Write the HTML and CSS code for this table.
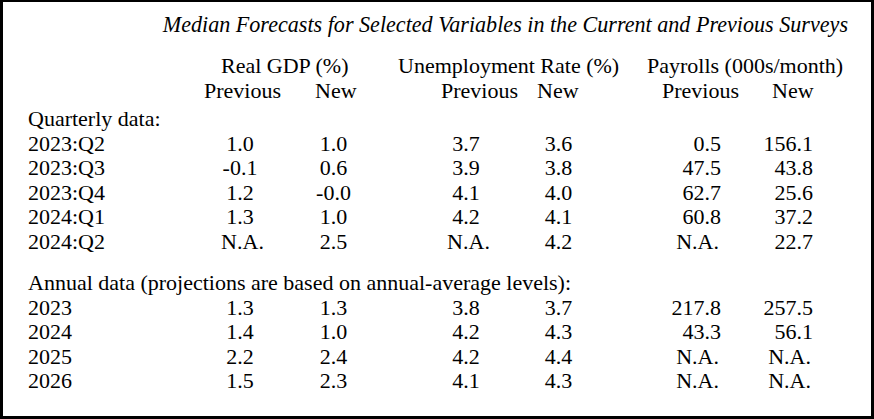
FILE: index.html
```html
<!DOCTYPE html>
<html lang="en">
<head>
<meta charset="utf-8">
<title>Median Forecasts</title>
<link rel="stylesheet" href="styles.css">
</head>
<body>
<div class="frame">
  <div class="title">Median Forecasts for Selected Variables in the Current and Previous Surveys</div>
  <div class="groups">
    <span class="g g1">Real GDP (%)</span>
    <span class="g g2">Unemployment Rate (%)</span>
    <span class="g g3">Payrolls (000s/month)</span>
  </div>
  <div class="subs">
    <span class="s s1">Previous</span>
    <span class="s s2">New</span>
    <span class="s s3">Previous</span>
    <span class="s s4">New</span>
    <span class="s s5">Previous</span>
    <span class="s s6">New</span>
  </div>

  <div class="section first">Quarterly data:</div>
  <div class="grid">
    <div class="lab">2023:Q2</div><div class="c">1.0</div><div class="c">1.0</div><div class="c">3.7</div><div class="c">3.6</div><div class="r">0.5</div><div class="r">156.1</div>
    <div class="lab">2023:Q3</div><div class="c">-0.1</div><div class="c">0.6</div><div class="c">3.9</div><div class="c">3.8</div><div class="r">47.5</div><div class="r">43.8</div>
    <div class="lab">2023:Q4</div><div class="c">1.2</div><div class="c">-0.0</div><div class="c">4.1</div><div class="c">4.0</div><div class="r">62.7</div><div class="r">25.6</div>
    <div class="lab">2024:Q1</div><div class="c">1.3</div><div class="c">1.0</div><div class="c">4.2</div><div class="c">4.1</div><div class="r">60.8</div><div class="r">37.2</div>
    <div class="lab">2024:Q2</div><div class="c na">N.A.</div><div class="c">2.5</div><div class="c na">N.A.</div><div class="c">4.2</div><div class="r na">N.A.</div><div class="r">22.7</div>
  </div>

  <div class="section annual">Annual data (projections are based on annual-average levels):</div>
  <div class="grid">
    <div class="lab">2023</div><div class="c">1.3</div><div class="c">1.3</div><div class="c">3.8</div><div class="c">3.7</div><div class="r">217.8</div><div class="r">257.5</div>
    <div class="lab">2024</div><div class="c">1.4</div><div class="c">1.0</div><div class="c">4.2</div><div class="c">4.3</div><div class="r">43.3</div><div class="r">56.1</div>
    <div class="lab">2025</div><div class="c">2.2</div><div class="c">2.4</div><div class="c">4.2</div><div class="c">4.4</div><div class="r na">N.A.</div><div class="r na">N.A.</div>
    <div class="lab">2026</div><div class="c">1.5</div><div class="c">2.3</div><div class="c">4.1</div><div class="c">4.3</div><div class="r na">N.A.</div><div class="r na">N.A.</div>
  </div>
</div>
</body>
</html>
```

FILE: styles.css
```css
html, body {
  margin: 0;
  padding: 0;
  background: #ffffff;
}

body {
  font-family: "Liberation Serif", "Times New Roman", serif;
  font-size: 22px;
  line-height: 24.5px;
  color: #000000;
}

.frame {
  box-sizing: border-box;
  width: 874px;
  height: 419px;
  border-style: solid;
  border-color: #000000;
  border-width: 2px 3px 3px 3px;
  padding: 11.3px 0 0 25px;
  overflow: hidden;
}

.title {
  font-style: italic;
  font-size: 22.12px;
  text-align: right;
  padding-right: 23px;
  white-space: nowrap;
}

.groups {
  display: flex;
  margin-top: 16.5px;
  padding-left: 193px;
  white-space: nowrap;
}

.g1 { width: 177px; flex: none; }
.g2 { width: 249px; flex: none; }
.g3 { flex: none; }

.subs {
  display: flex;
  padding-left: 176px;
  white-space: nowrap;
}

.s { flex: none; }
.s1 { width: 111px; }
.s2 { width: 126px; }
.s3 { width: 96px; }
.s4 { width: 125px; }
.s5 { width: 110px; }

.section {
  white-space: nowrap;
}

.section.first {
  margin-top: 4px;
}

.section.annual {
  margin-top: 17px;
}

.grid {
  display: grid;
  grid-template-columns: 187px 50px 137px 128px 57px 134px 92px;
  white-space: nowrap;
}

.c {
  text-align: center;
}

.r {
  text-align: right;
}

.c.na {
  padding-left: 5px;
}

.r.na {
  padding-right: 2px;
}
```
